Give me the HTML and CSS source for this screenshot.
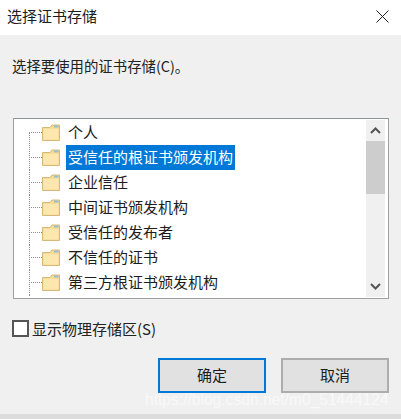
FILE: index.html
```html
<!DOCTYPE html>
<html lang="zh-CN">
<head>
    <meta charset="UTF-8">
    <meta name="viewport" content="width=device-width, initial-scale=1.0">
    <title>选择证书存储</title>
    <link rel="stylesheet" href="styles.css">
</head>
<body>
    <div class="dialog">
        <div class="titlebar">
            <span class="title">选择证书存储</span>
            <svg class="close" width="13" height="13" viewBox="0 0 13 13">
                <path d="M0.5 0.5L12.5 12.5M12.5 0.5L0.5 12.5" stroke="#222" stroke-width="1" fill="none"/>
            </svg>
        </div>
        <div class="content">
            <p class="prompt">选择要使用的证书存储(C)。</p>
            <div class="listbox">
                <div class="tree">
                    <div class="row first"><span class="stub"></span><svg class="folder"><use href="#folder"/></svg><span class="label">个人</span></div>
                    <div class="row"><span class="stub"></span><svg class="folder"><use href="#folder"/></svg><span class="label selected">受信任的根证书颁发机构</span></div>
                    <div class="row"><span class="stub"></span><svg class="folder"><use href="#folder"/></svg><span class="label">企业信任</span></div>
                    <div class="row"><span class="stub"></span><svg class="folder"><use href="#folder"/></svg><span class="label">中间证书颁发机构</span></div>
                    <div class="row"><span class="stub"></span><svg class="folder"><use href="#folder"/></svg><span class="label">受信任的发布者</span></div>
                    <div class="row"><span class="stub"></span><svg class="folder"><use href="#folder"/></svg><span class="label">不信任的证书</span></div>
                    <div class="row"><span class="stub"></span><svg class="folder"><use href="#folder"/></svg><span class="label">第三方根证书颁发机构</span></div>
                    <div class="tail"></div>
                </div>
                <div class="scrollbar">
                    <div class="arrow">
                        <svg width="11" height="7" viewBox="0 0 11 7"><path d="M1 6L5.5 1.5L10 6" stroke="#555" stroke-width="2" fill="none"/></svg>
                    </div>
                    <div class="thumb"></div>
                    <div class="track"></div>
                    <div class="arrow">
                        <svg width="11" height="7" viewBox="0 0 11 7"><path d="M1 1L5.5 5.5L10 1" stroke="#555" stroke-width="2" fill="none"/></svg>
                    </div>
                </div>
            </div>
            <div class="physical">
                <span class="checkbox"></span>
                <span>显示物理存储区(S)</span>
            </div>
            <div class="buttons">
                <div class="button default">确定</div>
                <div class="button">取消</div>
            </div>
        </div>
    </div>
    <div class="watermark">https://blog.csdn.net/m0_51444124</div>

    <svg class="defs" width="0" height="0">
        <symbol id="folder" viewBox="0 0 18 17">
            <path d="M0.5 3.5V16.5H17.5V1H10L8 3.5Z" fill="#f8dc95" stroke="#d6b878"/>
            <path d="M1.5 5H16.5V15.5H1.5Z" fill="#fde7ae"/>
            <path d="M12 1.5H16.5V3.5H12Z" fill="#8fc0d6"/>
        </symbol>
    </svg>
</body>
</html>
```

FILE: styles.css
```css
/* Page and window */
body {
    margin: 0;
    height: 419px;
    overflow: hidden;
    position: relative;
    font-family: "Noto Sans CJK SC", "Liberation Sans", sans-serif;
    font-size: 15px;
    color: #1c1c1c;
    background: linear-gradient(#e9e9e9, #dcdcdc);
}

.dialog {
    height: 414px;
    display: flex;
    flex-direction: column;
    background-color: #f0f0f0;
}

.defs {
    display: block;
}

/* Title bar */
.titlebar {
    height: 35px;
    box-sizing: border-box;
    flex: none;
    display: flex;
    align-items: center;
    justify-content: space-between;
    padding: 0 12px 3px 7px;
    background-color: #fff;
}

.title {
    line-height: 30px;
}

/* Dialog body */
.content {
    flex: 1;
    padding: 0 12px 0 13px;
}

.prompt {
    margin: 0 0 0 -1px;
    padding-top: 20px;
    height: 83px;
    box-sizing: border-box;
    font-size: 14.4px;
    line-height: 22px;
    color: #222;
}

/* Certificate store list */
.listbox {
    height: 181px;
    box-sizing: border-box;
    display: flex;
    justify-content: space-between;
    padding: 1px 3px 1px 0;
    background-color: #fff;
    border: 1px solid #a0a0a0;
    border-top-color: #8f959c;
    overflow: hidden;
}

.tree {
    padding: 0 0 0 15px;
    overflow: hidden;
}

.row {
    height: 25px;
    display: flex;
    align-items: center;
    white-space: nowrap;
}

/* Dotted tree lines */
.stub {
    width: 13px;
    align-self: stretch;
    flex: none;
    background-image:
        repeating-linear-gradient(90deg, #8c8c8c 0 1px, transparent 1px 2px),
        repeating-linear-gradient(180deg, #8c8c8c 0 1px, transparent 1px 2px);
    background-size: 100% 1px, 1px 100%;
    background-position: 0 50%, 0 0;
    background-repeat: no-repeat;
}

.first .stub {
    background-size: 100% 1px, 1px 50%;
    background-position: 0 50%, 0 100%;
}

.tail {
    height: 3px;
    width: 1px;
    background-image: repeating-linear-gradient(180deg, #8c8c8c 0 1px, transparent 1px 2px);
}

.folder {
    width: 18px;
    height: 17px;
    flex: none;
    margin-right: 6px;
}

.label {
    height: 25px;
    box-sizing: border-box;
    line-height: 23px;
    padding: 0 2px 2px;
}

.selected {
    background-color: #0078d7;
    color: #fff;
}

/* Scrollbar */
.scrollbar {
    width: 19px;
    flex: none;
    display: flex;
    flex-direction: column;
    background-color: #f0f0f0;
}

.arrow {
    height: 21px;
    flex: none;
    display: flex;
    align-items: center;
    justify-content: center;
}

.thumb {
    height: 53px;
    flex: none;
    background-color: #cdcdcd;
}

.track {
    flex: 1;
}

/* Checkbox row */
.physical {
    display: flex;
    align-items: center;
    gap: 3px;
    margin: 20px 0 0 -1px;
    height: 18px;
    color: #222;
}

.checkbox {
    width: 13px;
    height: 13px;
    background-color: #fff;
    border: 2px solid #555;
}

/* Buttons */
.buttons {
    display: flex;
    justify-content: flex-end;
    gap: 15px;
    margin-top: 21px;
}

.button {
    width: 108px;
    height: 35px;
    box-sizing: border-box;
    display: flex;
    align-items: center;
    justify-content: center;
    padding-bottom: 2px;
    background-color: #e1e1e1;
    border: 2px solid #adadad;
}

.button.default {
    border-color: #0078d7;
}

/* Blog watermark over the bottom edge */
.watermark {
    position: absolute;
    left: 145px;
    top: 390px;
    font-family: "Liberation Sans", sans-serif;
    font-size: 15.6px;
    line-height: 20px;
    color: rgba(255, 255, 255, 0.6);
    white-space: nowrap;
}
```
